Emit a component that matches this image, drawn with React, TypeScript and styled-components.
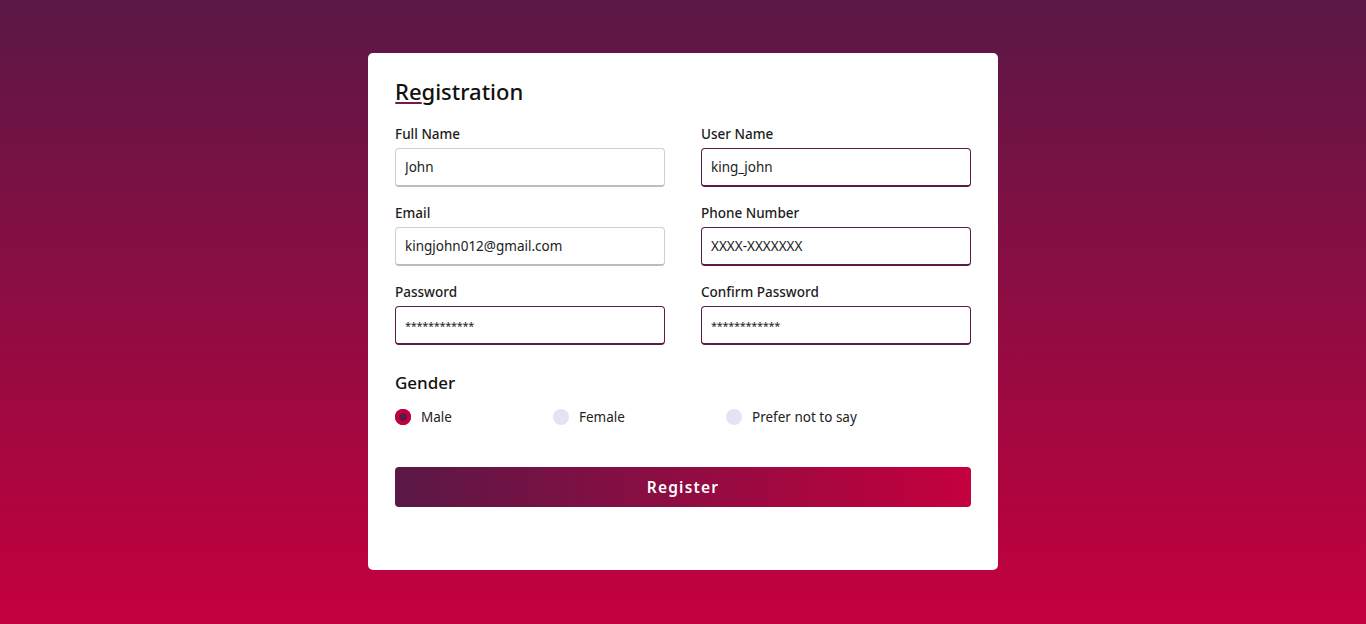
import React from "react";
import styled, { createGlobalStyle } from "styled-components";

const GlobalStyle = createGlobalStyle`
  html, body { margin: 0; padding: 0; }
  body {
    font-family: "Noto Sans", "Open Sans", sans-serif;
    background: linear-gradient(180deg, #5a1846 0%, #c5003e 100%);
    min-height: 624px;
  }
  * { box-sizing: border-box; }
`;

const Page = styled.div`
  min-height: 624px;
  display: flex;
  justify-content: center;
  padding-top: 53px;
`;

const Card = styled.form`
  width: 630px;
  height: 517px;
  background: #fff;
  border-radius: 5px;
  padding: 23px 27px 0 27px;
`;

const Title = styled.h2`
  position: relative;
  margin: 0 0 18px 0;
  font-size: 22px;
  line-height: 30px;
  font-weight: 500;
  color: #111;
  &::before {
    content: "";
    position: absolute;
    left: 0;
    bottom: 2px;
    width: 27px;
    height: 2px;
    border-radius: 2px;
    background: #7a1648;
  }
`;

const Grid = styled.div`
  display: grid;
  grid-template-columns: 270px 270px;
  column-gap: 36px;
  row-gap: 16px;
`;

const Field = styled.div`
  display: flex;
  flex-direction: column;
`;

const Label = styled.label`
  font-size: 13.5px;
  line-height: 20px;
  font-weight: 500;
  color: #1c1c1c;
  margin-bottom: 4px;
`;

const Input = styled.input<{ $active?: boolean; $secret?: boolean }>`
  height: 39px;
  border-radius: 4px;
  border: 1px solid ${(p) => (p.$active ? "#5c1a48" : "#cfcfcf")};
  border-bottom-width: 2px;
  border-bottom-color: ${(p) => (p.$active ? "#5c1a48" : "#bdbdbd")};
  padding: 0 9px;
  font-family: inherit;
  font-size: ${(p) => (p.$secret ? "11px" : "13.5px")};
  letter-spacing: ${(p) => (p.$secret ? "-0.3px" : "normal")};
  color: #222;
  outline: none;
  background: #fff;
`;

const GenderTitle = styled.div`
  margin-top: 26px;
  font-size: 17px;
  line-height: 24px;
  font-weight: 500;
  color: #111;
`;

const Options = styled.div`
  display: flex;
  margin-top: 12px;
`;

const Option = styled.label<{ $w: number }>`
  display: flex;
  align-items: center;
  width: ${(p) => p.$w}px;
  font-size: 13.5px;
  line-height: 20px;
  color: #222;
`;

const Dot = styled.span<{ $checked?: boolean }>`
  width: 16px;
  height: 16px;
  border-radius: 50%;
  margin-right: 10px;
  background: ${(p) => (p.$checked ? "#5a1846" : "#e5e2f6")};
  box-shadow: ${(p) => (p.$checked ? "inset 0 0 0 4px #c5003e" : "none")};
`;

const Button = styled.button`
  margin-top: 40px;
  width: 576px;
  height: 40px;
  border: none;
  border-radius: 4px;
  background: linear-gradient(90deg, #5a1846 0%, #c5003e 100%);
  color: #fff;
  font-family: inherit;
  font-size: 15.5px;
  font-weight: 600;
  letter-spacing: 1.2px;
  cursor: pointer;
`;

export default function App() {
  return (
    <>
      <GlobalStyle />
      <Page>
        <Card onSubmit={(e) => e.preventDefault()}>
          <Title>Registration</Title>
          <Grid>
            <Field>
              <Label>Full Name</Label>
              <Input defaultValue="John" />
            </Field>
            <Field>
              <Label>User Name</Label>
              <Input $active defaultValue="king_john" />
            </Field>
            <Field>
              <Label>Email</Label>
              <Input defaultValue="kingjohn012@gmail.com" />
            </Field>
            <Field>
              <Label>Phone Number</Label>
              <Input $active defaultValue="XXXX-XXXXXXX" />
            </Field>
            <Field>
              <Label>Password</Label>
              <Input $active $secret defaultValue="************" />
            </Field>
            <Field>
              <Label>Confirm Password</Label>
              <Input $active $secret defaultValue="************" />
            </Field>
          </Grid>
          <GenderTitle>Gender</GenderTitle>
          <Options>
            <Option $w={158}>
              <Dot $checked />
              Male
            </Option>
            <Option $w={173}>
              <Dot />
              Female
            </Option>
            <Option $w={200}>
              <Dot />
              Prefer not to say
            </Option>
          </Options>
          <Button type="submit">Register</Button>
        </Card>
      </Page>
    </>
  );
}
